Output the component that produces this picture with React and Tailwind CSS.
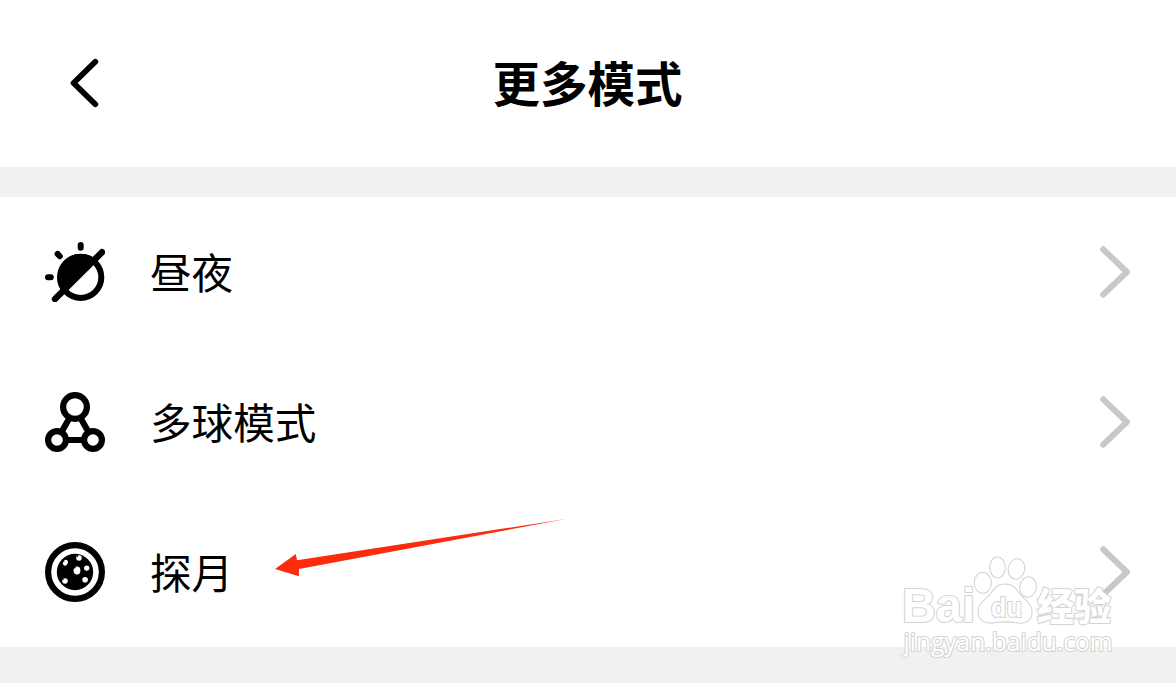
function DayNightIcon() {
  return (
    <svg viewBox="0 0 60 60" className="size-[60px] shrink-0" fill="none" stroke="#000" strokeWidth="6" strokeLinecap="round">
      <circle cx="35.7" cy="35.3" r="20.6" />
      <path d="M50.3 17 A23.5 23.5 0 0 0 17.5 50.2 Z" fill="#000" stroke="none" />
      <path d="M57 10.2 10 57" strokeWidth="6.4" />
      <path d="M35.7 3v2.8M12.6 11.9l2.2 2.3M3 35.3h2.8" />
    </svg>
  )
}

function MultiBallIcon() {
  return (
    <svg viewBox="0 0 60 60" className="size-[60px] shrink-0" fill="none" stroke="#000" strokeWidth="6.2">
      <circle cx="30" cy="15" r="11.9" />
      <circle cx="12" cy="48" r="8.9" />
      <circle cx="48" cy="48" r="8.9" />
      <path d="M24.5 26 16.5 40M35.5 26l8 14M21 48h18" />
    </svg>
  )
}

function MoonIcon() {
  return (
    <svg viewBox="0 0 60 60" className="size-[60px] shrink-0">
      <circle cx="30" cy="30" r="26.9" fill="none" stroke="#000" strokeWidth="6.2" />
      <circle cx="30" cy="30" r="18.2" />
      <g fill="#fff">
        <circle cx="34" cy="16" r="2.8" />
        <ellipse cx="20.4" cy="20.8" rx="2.3" ry="3" transform="rotate(25 20.4 20.8)" />
        <circle cx="41.7" cy="26.1" r="2.7" />
        <ellipse cx="32" cy="28.6" rx="3.4" ry="4" />
        <circle cx="20" cy="39" r="2.8" />
        <circle cx="40.1" cy="37.8" r="2.8" />
      </g>
      <g>
        <circle cx="32.3" cy="14.3" r="0.8" />
        <circle cx="18.7" cy="19.2" r="0.8" />
        <circle cx="29.6" cy="25.4" r="1" />
        <circle cx="18" cy="37.2" r="0.8" />
      </g>
    </svg>
  )
}

function Chevron() {
  return (
    <svg viewBox="0 0 32 54" className="h-[54px] w-8" fill="none" stroke="#c8c8ca" strokeWidth="6" strokeLinecap="round" strokeLinejoin="round">
      <path d="M4.2 4.3 27.9 27 4.2 49.7" />
    </svg>
  )
}

function Watermark() {
  return (
    <svg viewBox="0 0 240 130" className="absolute left-[890px] top-[540px] h-[130px] w-[240px]" fill="#fff" stroke="#d4d4d4" strokeWidth="1.1" strokeLinejoin="round">
      <g fillOpacity="0.75">
        <ellipse cx="92.8" cy="42.8" rx="8.5" ry="10.5" />
        <ellipse cx="107.5" cy="27.5" rx="7.8" ry="10.5" />
        <ellipse cx="126.5" cy="29" rx="8.2" ry="10.3" transform="rotate(12 126.5 29)" />
        <ellipse cx="138" cy="47" rx="8.4" ry="10.2" transform="rotate(8 138 47)" />
        <path d="M115 44c8 0 11 4 14 9 4 6 13 9 13 19 0 9-7 12-14 11-8-1.5-17-1.5-25 0-8 1-15-3-15-11 0-10 9-13 13-19 4-6 7-9 14-9z" />
      </g>
      <g strokeWidth="2.2" paintOrder="stroke">
        <text x="12" y="82" textLength="73" lengthAdjust="spacingAndGlyphs" className="font-['Liberation_Sans',sans-serif] text-[48px] font-bold">Bai</text>
        <text x="101" y="77" textLength="31" lengthAdjust="spacingAndGlyphs" className="font-['Liberation_Sans',sans-serif] text-[28px] font-bold">du</text>
        <text x="147" y="80" textLength="74" lengthAdjust="spacingAndGlyphs" className="font-['Noto_Sans_CJK_SC',sans-serif] text-[38px] font-black">经验</text>
        <text x="13.5" y="110.5" textLength="209" lengthAdjust="spacingAndGlyphs" className="font-['Open_Sans',sans-serif] text-[25px] font-medium">jingyan.baidu.com</text>
      </g>
    </svg>
  )
}

function Arrow() {
  return (
    <svg viewBox="0 0 300 66" className="absolute left-[270px] top-[515px] h-[66px] w-[300px]">
      <path d="M5 54 25.8 39 27 45.2 296 4 29 54 29 61.2z" fill="#fb2b0c" />
    </svg>
  )
}

const MODES = [
  { label: '昼夜', icon: DayNightIcon },
  { label: '多球模式', icon: MultiBallIcon },
  { label: '探月', icon: MoonIcon },
]

export default function App() {
  return (
    <div className="relative flex h-[683px] w-[1176px] flex-col overflow-hidden bg-[#f1f1f1] font-['Noto_Sans_CJK_SC',sans-serif] text-black">
      <header className="grid h-[167px] shrink-0 grid-cols-[1fr_auto_1fr] items-center bg-white pb-0.5">
        <button aria-label="返回" className="ml-[66px] w-9">
          <svg viewBox="0 0 36 54" className="h-[54px] w-9" fill="none" stroke="#000" strokeWidth="5.8" strokeLinecap="round" strokeLinejoin="round">
            <path d="M29.3 5.8 7.6 27 29.3 48.2" />
          </svg>
        </button>
        <h1 className="pr-px pb-0.5 text-[47.5px] leading-none font-bold">更多模式</h1>
      </header>

      <main className="mt-[30px] bg-white">
        {MODES.map(({ label, icon: Icon }) => (
          <div key={label} className="flex h-[150px] items-center px-[45px]">
            <Icon />
            <span className="ml-[45px] flex-1 text-[41.6px] leading-none">{label}</span>
            <Chevron />
          </div>
        ))}
      </main>

      <Arrow />
      <Watermark />
    </div>
  )
}
